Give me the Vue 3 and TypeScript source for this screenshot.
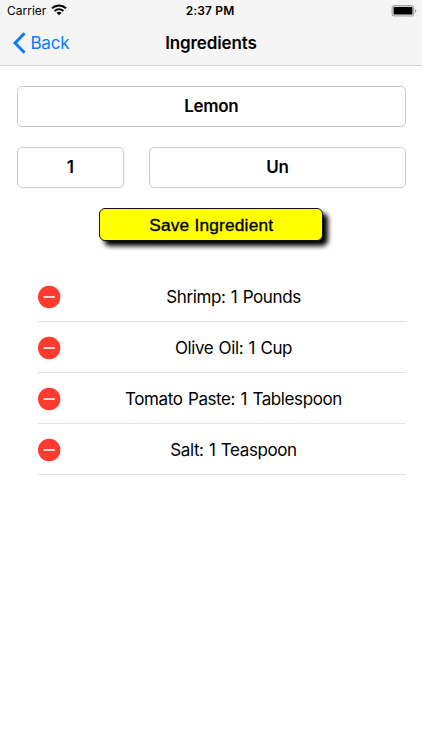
<script setup lang="ts">
import { ref } from 'vue'

interface Ingredient {
  name: string
  amount: number
  unit: string
}

const name = ref('Lemon')
const quantity = ref('1')
const unit = ref('Un')
const ingredients = ref<Ingredient[]>([
  { name: 'Shrimp', amount: 1, unit: 'Pounds' },
  { name: 'Olive Oil', amount: 1, unit: 'Cup' },
  { name: 'Tomato Paste', amount: 1, unit: 'Tablespoon' },
  { name: 'Salt', amount: 1, unit: 'Teaspoon' },
])

function save(): void {
  ingredients.value.push({ name: name.value, amount: Number(quantity.value), unit: unit.value })
}

function remove(index: number): void {
  ingredients.value.splice(index, 1)
}
</script>

<template>
  <div class="screen">
    <header class="top">
      <div class="status">
        <div class="carrier">
          <span>Carrier</span>
          <svg class="wifi" width="16" height="12" viewBox="0 0 16 12">
            <g fill="none" stroke="#000" stroke-width="2.1">
              <path d="M1 4.3C5 .5 11 .5 15 4.3" />
              <path d="M3.6 7C6.2 4.6 9.8 4.6 12.4 7" />
            </g>
            <path d="M5.5 8.8C7 7.5 9 7.5 10.5 8.8L8 11.3Z" fill="#000" />
          </svg>
        </div>
        <span class="clock">2:37 PM</span>
        <div class="power">
          <svg width="26" height="12" viewBox="0 0 26 12">
            <rect x="1.1" y=".6" width="21.6" height="10.4" rx="2.8" fill="#e4e3e4" stroke="#a5a4a5" stroke-width="1.1" />
            <rect x="2.6" y="2" width="18.8" height="7.6" rx="1" fill="#000" />
            <path d="M24.2 4.1c1.5.5 1.5 3.1 0 3.6Z" fill="#8e8d8e" />
          </svg>
        </div>
      </div>
      <nav class="nav">
        <a class="back">
          <svg width="13" height="22" viewBox="0 0 13 22">
            <path d="M11.6 1.3 2 11l9.6 9.7" fill="none" stroke="#087cff" stroke-width="3" />
          </svg>
          <span>Back</span>
        </a>
        <h1 class="title">Ingredients</h1>
      </nav>
    </header>

    <main class="content">
      <form class="form" @submit.prevent="save">
        <input v-model="name" class="field wide" type="text" />
        <input v-model="quantity" class="field" type="text" />
        <input v-model="unit" class="field" type="text" />
        <button class="save" type="submit">Save Ingredient</button>
      </form>

      <ul class="list">
        <li v-for="(item, index) in ingredients" :key="item.name" class="row">
          <button class="remove" type="button" @click="remove(index)">
            <svg width="24" height="24" viewBox="0 0 24 24">
              <circle cx="12.2" cy="12" r="11.2" fill="#ff3b30" />
              <path d="M6.6 12h11.2" stroke="#fff" stroke-width="1.6" />
            </svg>
          </button>
          <span class="label">{{ item.name }}: {{ item.amount }} {{ item.unit }}</span>
        </li>
      </ul>
    </main>
  </div>
</template>

<style>
body {
  background: #fff;
}
</style>

<style scoped>
.screen {
  box-sizing: border-box;
  width: 100%;
  height: 750px;
  background: #fff;
  color: #000;
  font-family: Inter, 'Liberation Sans', sans-serif;
}

.top {
  box-sizing: border-box;
  height: 66px;
  background: #f6f5f6;
  border-bottom: 1px solid #d3d2d3;
}

.status {
  display: grid;
  grid-template-columns: 1fr auto 1fr;
  align-items: center;
  height: 21px;
  padding: 0 5px 0 7px;
  font-size: 12px;
  line-height: 21px;
}

.carrier {
  display: flex;
  align-items: center;
  gap: 5px;
  margin-right: 2px;
}

.wifi {
  margin-top: -1px;
}

.clock {
  margin: 0 2px 0 -2px;
  font-weight: 600;
  font-size: 12px;
  letter-spacing: 0.15px;
}

.power {
  display: flex;
  justify-content: flex-end;
}

.nav {
  display: grid;
  grid-template-columns: 1fr auto 1fr;
  align-items: center;
  height: 44px;
  padding: 0 13px;
  font-size: 17px;
}

.back {
  display: flex;
  align-items: center;
  gap: 4.5px;
  color: #087cff;
  letter-spacing: -0.25px;
}

.title {
  margin: 0;
  font-size: 17px;
  font-weight: 600;
  letter-spacing: -0.12px;
}

.content {
  padding: 20px 16px 0;
}

.form {
  display: grid;
  grid-template-columns: 107.5px 257px;
  justify-content: space-between;
  row-gap: 20px;
  padding-left: 0.5px;
}

.field {
  box-sizing: border-box;
  width: 100%;
  height: 41px;
  padding: 0 8px 2px;
  border: 1px solid #cbcbcb;
  border-radius: 5px;
  background: #fff;
  color: #000;
  font: 600 17px Inter, 'Liberation Sans', sans-serif;
  letter-spacing: -0.3px;
  text-align: center;
  outline: none;
}

.wide {
  grid-column: 1 / -1;
}

.save {
  grid-column: 1 / -1;
  justify-self: center;
  box-sizing: border-box;
  width: 224px;
  height: 33px;
  padding: 1px 0 0;
  border: 1px solid #111;
  border-radius: 6px;
  background: #ff0;
  box-shadow: 5px 5px 5px #000;
  color: #000;
  font: 17.3px 'Liberation Sans', sans-serif;
  letter-spacing: 0.2px;
  -webkit-text-stroke: 0.35px #000;
}

.list {
  margin: 30px 0 0;
  padding: 0 0 0 21px;
  list-style: none;
}

.row {
  box-sizing: border-box;
  display: grid;
  grid-template-columns: 24px 1fr;
  align-items: center;
  height: 51px;
  padding-top: 2px;
  border-bottom: 1px solid #e3e3e5;
}

.remove {
  display: flex;
  padding: 0;
  border: 0;
  background: none;
}

.label {
  font-size: 17px;
  letter-spacing: -0.4px;
  word-spacing: 1px;
  text-align: center;
}
</style>
